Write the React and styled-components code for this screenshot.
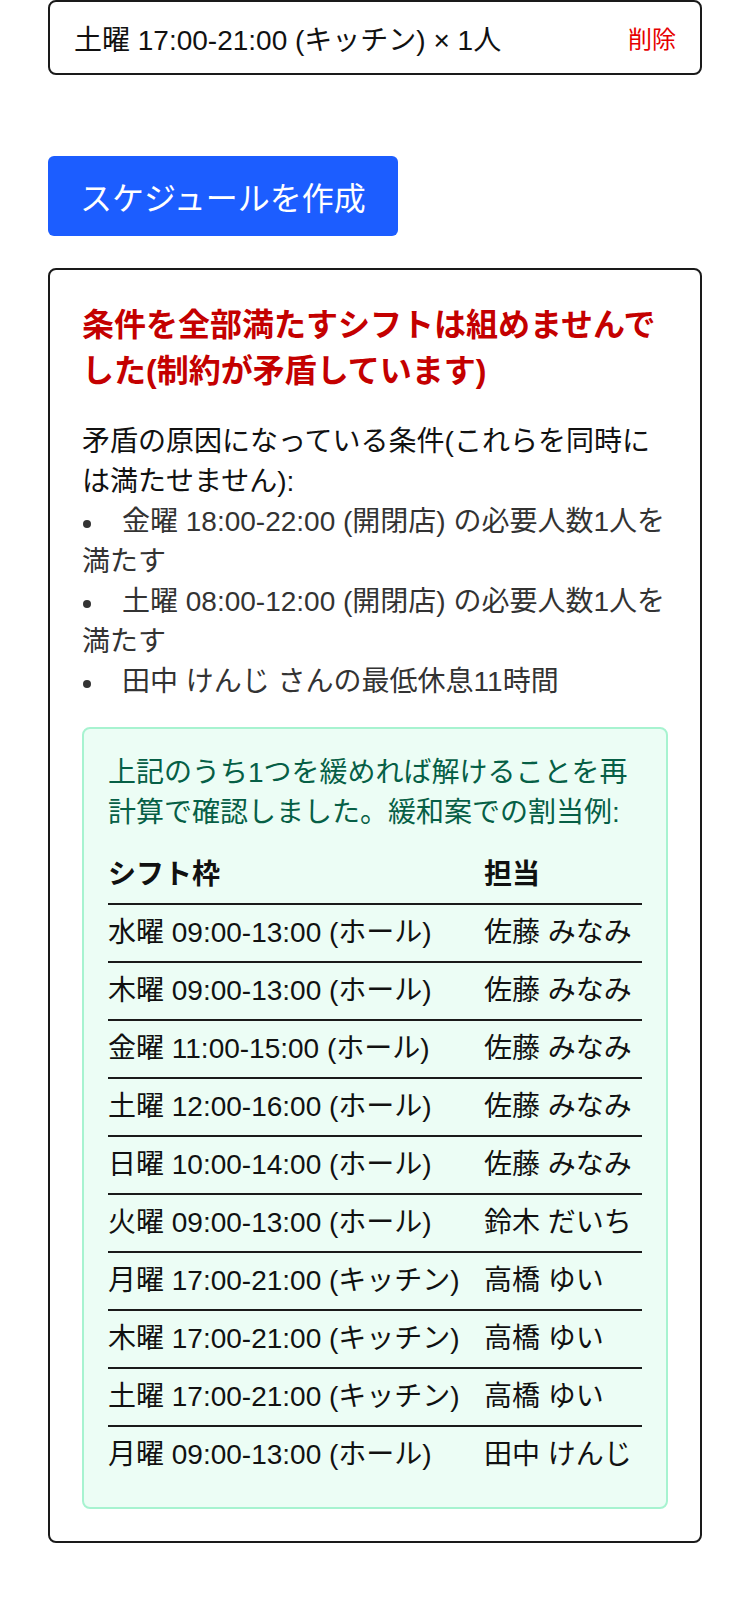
import React from "react";
import styled, { createGlobalStyle } from "styled-components";

const GlobalStyle = createGlobalStyle`
  html, body {
    margin: 0;
    padding: 0;
    background: #fff;
  }
  body {
    font-family: "Liberation Sans", Arial, "Noto Sans CJK JP", sans-serif;
    color: #111;
  }
  * {
    box-sizing: border-box;
  }
`;

const Page = styled.main`
  padding: 0 48px 60px;
`;

const SlotCard = styled.div`
  height: 75px;
  display: flex;
  align-items: center;
  justify-content: space-between;
  padding: 0 24px;
  border: 2px solid #1a1a1a;
  border-radius: 8px;
  font-size: 28px;
`;

const DeleteButton = styled.button`
  border: none;
  background: none;
  padding: 0;
  font-family: inherit;
  font-size: 24px;
  color: #e60000;
  cursor: pointer;
`;

const PrimaryButton = styled.button`
  display: block;
  margin-top: 81px;
  height: 80px;
  padding: 0 32px;
  border: none;
  border-radius: 6px;
  background: #1c5dff;
  color: #fff;
  font-family: inherit;
  font-size: 32px;
  cursor: pointer;
`;

const ResultCard = styled.section`
  margin-top: 32px;
  padding: 32px;
  border: 2px solid #1a1a1a;
  border-radius: 8px;
  font-size: 28px;
  line-height: 40px;
`;

const ErrorTitle = styled.h2`
  margin: 0 0 28px;
  font-size: 32px;
  line-height: 46px;
  font-weight: 700;
  color: #c40000;
`;

const Intro = styled.p`
  margin: 0;
  color: #111;
`;

const ConflictList = styled.ul`
  list-style: none;
  margin: 0;
  padding: 0;
  color: #333;
`;

const Bullet = styled.span`
  display: inline-block;
  width: 40px;
  &::before {
    content: "";
    display: inline-block;
    width: 8px;
    height: 8px;
    margin-left: 1px;
    border-radius: 50%;
    background: currentColor;
    vertical-align: middle;
  }
`;

const SuggestionBox = styled.div`
  margin-top: 25px;
  padding: 24px;
  border: 2px solid #a7f3d0;
  border-radius: 8px;
  background: #ecfdf5;
`;

const SuggestionText = styled.p`
  margin: 0;
  color: #065f46;
`;

const AssignTable = styled.table`
  width: 100%;
  margin-top: 14px;
  border-collapse: separate;
  border-spacing: 0;
  color: #111;
`;

const HeadCell = styled.th`
  padding: 8px 0;
  text-align: left;
  font-weight: 700;
  border-bottom: 2px solid #1a1a1a;
  width: ${p => (p.$wide ? "376px" : "auto")};
`;

const Cell = styled.td`
  padding: 8px 0;
  border-bottom: ${p => (p.$last ? "none" : "2px solid #1a1a1a")};
  white-space: nowrap;
`;

const conflicts = [
  "金曜 18:00-22:00 (開閉店) の必要人数1人を満たす",
  "土曜 08:00-12:00 (開閉店) の必要人数1人を満たす",
  "田中 けんじ さんの最低休息11時間",
];

const assignments = [
  ["水曜 09:00-13:00 (ホール)", "佐藤 みなみ"],
  ["木曜 09:00-13:00 (ホール)", "佐藤 みなみ"],
  ["金曜 11:00-15:00 (ホール)", "佐藤 みなみ"],
  ["土曜 12:00-16:00 (ホール)", "佐藤 みなみ"],
  ["日曜 10:00-14:00 (ホール)", "佐藤 みなみ"],
  ["火曜 09:00-13:00 (ホール)", "鈴木 だいち"],
  ["月曜 17:00-21:00 (キッチン)", "高橋 ゆい"],
  ["木曜 17:00-21:00 (キッチン)", "高橋 ゆい"],
  ["土曜 17:00-21:00 (キッチン)", "高橋 ゆい"],
  ["月曜 09:00-13:00 (ホール)", "田中 けんじ"],
];

export default function App() {
  return (
    <>
      <GlobalStyle />
      <Page>
        <SlotCard>
          <span>土曜 17:00-21:00 (キッチン) × 1人</span>
          <DeleteButton type="button">削除</DeleteButton>
        </SlotCard>

        <PrimaryButton type="button">スケジュールを作成</PrimaryButton>

        <ResultCard>
          <ErrorTitle>条件を全部満たすシフトは組めませんでした(制約が矛盾しています)</ErrorTitle>
          <Intro>矛盾の原因になっている条件(これらを同時には満たせません):</Intro>
          <ConflictList>
            {conflicts.map(text => (
              <li key={text}>
                <Bullet />
                {text}
              </li>
            ))}
          </ConflictList>

          <SuggestionBox>
            <SuggestionText>
              上記のうち1つを緩めれば解けることを再計算で確認しました。緩和案での割当例:
            </SuggestionText>
            <AssignTable>
              <thead>
                <tr>
                  <HeadCell $wide>シフト枠</HeadCell>
                  <HeadCell>担当</HeadCell>
                </tr>
              </thead>
              <tbody>
                {assignments.map(([slot, person], i) => (
                  <tr key={i}>
                    <Cell $last={i === assignments.length - 1}>{slot}</Cell>
                    <Cell $last={i === assignments.length - 1}>{person}</Cell>
                  </tr>
                ))}
              </tbody>
            </AssignTable>
          </SuggestionBox>
        </ResultCard>
      </Page>
    </>
  );
}
